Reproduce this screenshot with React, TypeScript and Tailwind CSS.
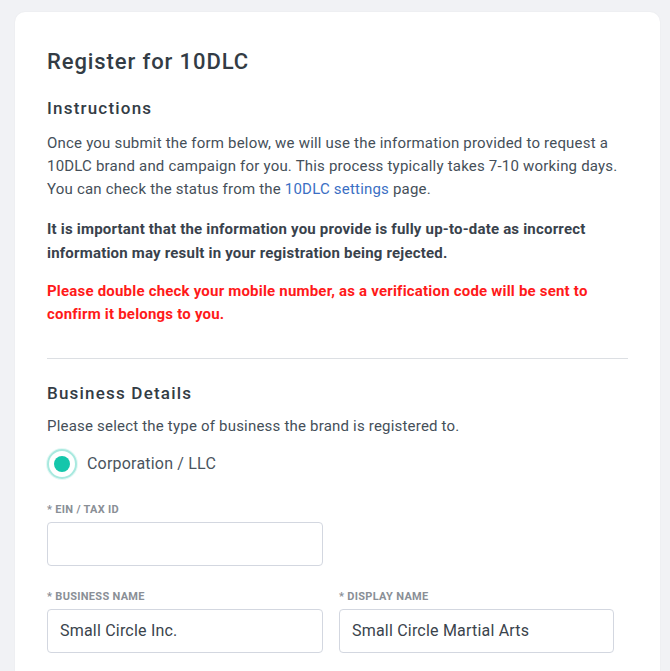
import React from "react";

export default function App() {
  return (
    <div className="min-h-[671px] bg-[#f1f2f5] pt-3 pl-[15px] pr-[10px]" style={{ fontFamily: "Roboto, 'Liberation Sans', sans-serif" }}>
      <div className="bg-white rounded-[10px] px-8 pt-[35px] pb-10 shadow-[0_0_2px_rgba(0,0,0,0.05)]">
        <h1 className="text-[22px] leading-[30px] font-medium tracking-[0.9px] text-[#333c45]">Register for 10DLC</h1>
        <h2 className="mt-[19px] text-[17px] leading-[24px] font-medium tracking-[1.2px] text-[#333c45]">Instructions</h2>
        <p className="mt-[12px] text-[15px] leading-[23px] tracking-[0.2px] text-[#454f59]">
          Once you submit the form below, we will use the information provided to request a 10DLC brand and campaign for you. This process typically takes 7-10 working days. You can check the status from the <span className="text-[#3b6fc4]">10DLC settings</span> page.
        </p>
        <p className="mt-[16px] text-[15px] leading-[24px] font-bold tracking-[0.2px] text-[#39424c]">
          It is important that the information you provide is fully up-to-date as incorrect information may result in your registration being rejected.
        </p>
        <p className="mt-[15px] text-[15px] leading-[23px] font-bold tracking-[0.2px] text-[#ff1a1a]">
          Please double check your mobile number, as a verification code will be sent to confirm it belongs to you.
        </p>
        <div className="mt-[32px] border-t border-[#dcdfe3]" />
        <h2 className="mt-[22px] text-[17px] leading-[24px] font-medium tracking-[1.2px] text-[#333c45]">Business Details</h2>
        <p className="mt-[10px] text-[15px] leading-[23px] tracking-[0.2px] text-[#454f59]">Please select the type of business the brand is registered to.</p>
        <div className="mt-[11px] flex items-center gap-[10px]">
          <div className="w-[30px] h-[30px] rounded-full border-2 border-[#a8e9df] bg-white flex items-center justify-center shadow-[0_0_0_1px_rgba(168,233,223,0.3)]">
            <div className="w-[16px] h-[16px] rounded-full bg-[#15c6ab]" />
          </div>
          <span className="text-[16px] tracking-[0.2px] text-[#4a545e]">Corporation / LLC</span>
        </div>
        <div className="mt-[24px] w-[276px]">
          <label className="block text-[11px] leading-[14px] font-bold uppercase tracking-[0.3px] text-[#8a8f96]">* EIN / TAX ID</label>
          <div className="mt-[5px] h-[44px] rounded-[4px] border border-[#d3d7e0] bg-white" />
        </div>
        <div className="mt-[24px] flex gap-[16px]">
          <div className="w-[276px]">
            <label className="block text-[11px] leading-[14px] font-bold uppercase tracking-[0.3px] text-[#8a8f96]">* BUSINESS NAME</label>
            <div className="mt-[5px] h-[44px] rounded-[4px] border border-[#d3d7e0] bg-white flex items-center px-[12px] text-[16px] tracking-[0.2px] text-[#3a434c]">Small Circle Inc.</div>
          </div>
          <div className="w-[275px]">
            <label className="block text-[11px] leading-[14px] font-bold uppercase tracking-[0.3px] text-[#8a8f96]">* DISPLAY NAME</label>
            <div className="mt-[5px] h-[44px] rounded-[4px] border border-[#d3d7e0] bg-white flex items-center px-[12px] text-[16px] tracking-[0.2px] text-[#3a434c]">Small Circle Martial Arts</div>
          </div>
        </div>
      </div>
    </div>
  );
}
